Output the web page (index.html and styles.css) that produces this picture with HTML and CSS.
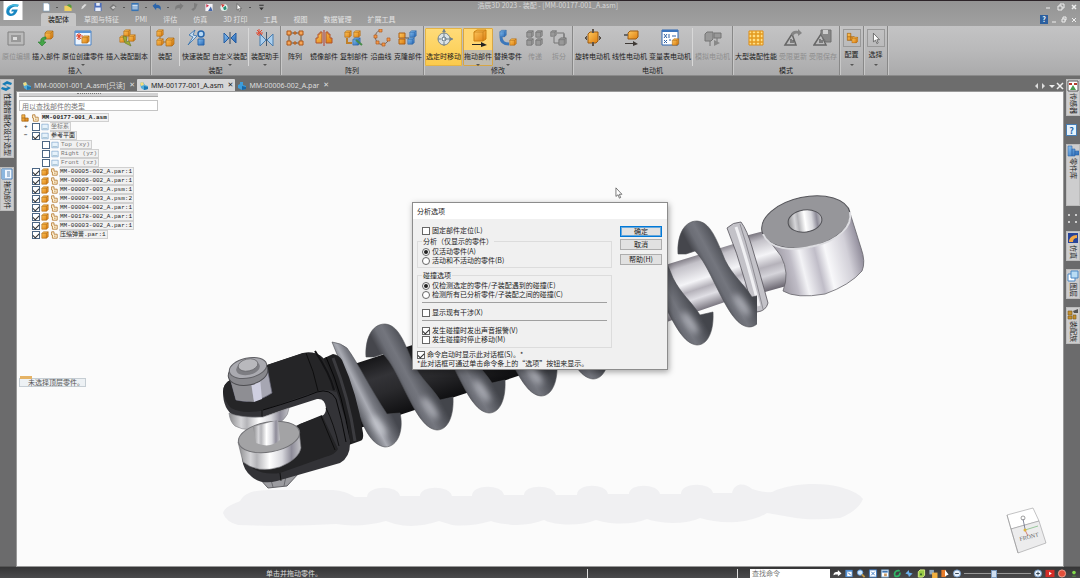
FILE: index.html
```html
<!DOCTYPE html>
<html lang="zh-CN">
<head>
  <meta charset="utf-8">
  <title>浩辰3D 2023 - 装配 - [MM-00177-001_A.asm]</title>
  <link rel="stylesheet" href="styles.css">
</head>
<body>

  <!-- shared icons -->
  <svg class="sprite" aria-hidden="true">
    <defs>
      <linearGradient id="gOrange" x1="0" y1="0" x2="1" y2="1"><stop offset="0" stop-color="#ffc95e"/><stop offset="1" stop-color="#dc7d10"/></linearGradient>
      <linearGradient id="gBlue" x1="0" y1="0" x2="1" y2="1"><stop offset="0" stop-color="#8cc4f2"/><stop offset="1" stop-color="#2465b4"/></linearGradient>
    </defs>
    <symbol id="box" viewBox="0 0 10 10"><path d="M1 3l2-2h6v6L7 9H1z" fill="url(#gOrange)" stroke="#a86410" stroke-width=".7"/><path d="M1 3h6l2-2M7 3v6" fill="none" stroke="#a86410" stroke-width=".6"/></symbol>
    <symbol id="bluebox" viewBox="0 0 10 10"><path d="M1 3l2-2h6v6L7 9H1z" fill="url(#gBlue)" stroke="#2a62a4" stroke-width=".7"/><path d="M1 3h6l2-2M7 3v6" fill="none" stroke="#2a62a4" stroke-width=".6"/></symbol>
    <symbol id="graybox" viewBox="0 0 10 10"><path d="M1 3l2-2h6v6L7 9H1z" fill="#999" stroke="#757575"/><path d="M1 3h6l2-2M7 3v6" fill="none" stroke="#707070" stroke-width=".7"/></symbol>
    <symbol id="asm" viewBox="0 0 10 10"><path d="M1 1h4v4h4v4H1z" fill="url(#gOrange)" stroke="#9c5c0c" stroke-width=".8"/><path d="M1 5h4v4" fill="none" stroke="#9c5c0c" stroke-width=".8"/></symbol>
    <symbol id="lock" viewBox="0 0 10 10"><path d="M2 5V1h3v3h4v5H3V5z" fill="#fff3d6" stroke="#b07428"/><path d="M5 6h2v1H5z" fill="#b07428"/></symbol>
    <symbol id="plane" viewBox="0 0 10 10"><path d="M1 1.500h8v7H1z" fill="#e6f2fb" stroke="#79a4cc" stroke-width=".8"/><path d="M2 7h6" stroke="#8ab" stroke-width=".8"/></symbol>
    <symbol id="tabasm" viewBox="0 0 10 10"><path d="M1 2l3-1 2 3 3 1v3l-4 1-3-2z" fill="#54acd8"/><path d="M1 2l3-1 1 3-3 1z" fill="#f4dc7c"/><path d="M5 5l4 1v2l-4 1z" fill="#1b78b4"/></symbol>
    <symbol id="tabpar" viewBox="0 0 10 10"><path d="M3 1h3v3l3 1v3l-4 1-4-2V4l2-1z" fill="#3d9ddb"/><path d="M5 5l4 1v2l-4 1z" fill="#1767a8"/></symbol>
    <symbol id="cursor" viewBox="0 0 10 14"><path d="M2 1v10l2.500-2 1.500 4 1.500-.7L6 8.500h3z" fill="#fff" stroke="#444" stroke-width=".8"/></symbol>
  </svg>

  <header class="titlebar">
    <svg class="logo" viewBox="0 0 20 20" aria-label="浩辰3D"><path d="M0 0h20v20H0z" fill="#fff"/><path d="M16 4C10 2 4 5 3 10c-1 5 4 7 8 5 2-1 3-3 4-6H9l-1 2h3c-1 2-3 3-4 2-2-2 0-6 4-7 2-.5 4-.3 4 0z" fill="#1887c2"/><path d="M3 9c1-4 6-7 13-5l-1 2C9 4 6 6 3 9z" fill="#45b9dd"/></svg>
    <div class="titlebar-rows">
      <div class="title-row">
        <div class="quick">
          <button aria-label="新建"><svg viewBox="0 0 10 10"><path d="M2 0h5l2 2v7H2z" fill="#fff" stroke="#7799b8" stroke-width=".7"/></svg></button>
          <i class="dot"></i>
          <button aria-label="打开"><svg viewBox="0 0 10 10"><path d="M1 3h4l1 1h3v5H1z" fill="#efd05d"/><path d="M4 3c1-2 3-2 5 0v3L6 4z" fill="#55993b"/></svg></button>
          <button aria-label="编辑"><svg viewBox="0 0 10 10"><path d="M3 7l1-3 3-3 2 1-4 4z" fill="#ddd"/></svg></button>
          <button aria-label="保存"><svg viewBox="0 0 10 10"><path d="M1 0h8v9H1z" fill="#4d6fbc"/><path d="M3 0h4v3H3zM2 5h6v4H2z" fill="#e6ecf8"/></svg></button>
          <button aria-label="打印"><svg viewBox="0 0 10 10"><path d="M1 5l4-4 4 3-4 5z" fill="#777"/><path d="M3 5l3-2 2 2-3 2z" fill="#ccc"/></svg></button>
          <i class="dot"></i>
          <button aria-label="属性"><svg viewBox="0 0 10 10"><path d="M1 0h8v9H1z" fill="#3774b5"/><path d="M2 2h6v1H2zM2 4h6v1H2zM2 6h6v1H2z" fill="#fff"/></svg></button>
          <i class="dot"></i>
          <button aria-label="撤消"><svg viewBox="0 0 10 10"><path d="M0 3l4-3v2c4 0 6 2 5 6-1-2-3-3-5-2v2z" fill="#2c65aa"/></svg></button>
          <i class="dot"></i>
          <button aria-label="重做"><svg viewBox="0 0 10 10"><path d="M10 3L6 0v2C2 2 0 4 1 8c1-2 3-3 5-2v2z" fill="#7c7c7c"/></svg></button>
          <button aria-label="更新"><svg viewBox="0 0 10 10"><path d="M5 0l4 1-2 5-3 3-2-2 3-2z" fill="#7d7d7d"/></svg></button>
          <button aria-label="检查"><svg viewBox="0 0 10 10"><path d="M1 1h8v8H1z" fill="#f3f3f8"/><path d="M2 1l3 2-3 2z" fill="#d2334a"/><path d="M4 9l3-5 2 5z" fill="#4668aa"/></svg></button>
          <button aria-label="目标"><svg viewBox="0 0 10 10"><circle cx="5" cy="5" r="4" fill="#e5f3ee"/><path d="M2 1l4 1-3 3z" fill="#d53a38"/><path d="M4 5l3-2 1 4-3 1z" fill="#2a9076"/></svg></button>
          <button aria-label="选择"><svg viewBox="0 0 10 14"><use href="#cursor"/></svg></button>
          <i class="dot"></i>
          <button aria-label="自定义"><svg viewBox="0 0 10 10"><path d="M3 2h5v1H3zM3 5h5L5.500 8z" fill="#333"/></svg></button>
        </div>
        <h1 class="title">浩辰3D 2023 - 装配 - [MM-00177-001_A.asm]</h1>
        <div class="window-buttons">
          <button aria-label="最小化"><svg viewBox="0 0 8 8"><path d="M2 5h4" stroke="#eee"/></svg></button>
          <button aria-label="还原"><svg viewBox="0 0 8 8"><path d="M1 3h4v4H1zM3 3V1h4v4H5" stroke="#eee" fill="none"/></svg></button>
          <button aria-label="关闭"><svg viewBox="0 0 8 8"><path d="M2 2l4 4M6 2L2 6" stroke="#eee" stroke-width="1.500"/></svg></button>
        </div>
      </div>
      <div class="menu-row">
        <nav class="menu">
          <a href="#" class="current">装配体</a>
          <a href="#">草图与特征</a>
          <a href="#">PMI</a>
          <a href="#">评估</a>
          <a href="#">仿真</a>
          <a href="#">3D 打印</a>
          <a href="#">工具</a>
          <a href="#">视图</a>
          <a href="#">数据管理</a>
          <a href="#">扩展工具</a>
        </nav>
        <div class="doc-buttons">
          <button class="help" aria-label="帮助">?</button>
          <button aria-label="最小化文档"><svg viewBox="0 0 8 8"><path d="M2 6h4" stroke="#eee"/></svg></button>
          <button aria-label="还原文档"><svg viewBox="0 0 8 8"><path d="M2 3h3v3H2zM3 3V1h3v3H5" stroke="#eee" fill="none"/></svg></button>
          <button aria-label="关闭文档"><svg viewBox="0 0 8 8"><path d="M2 2l4 4M6 2L2 6" stroke="#eee"/></svg></button>
        </div>
      </div>
    </div>
  </header>

  <div class="ribbon">
    <section class="group">
      <div class="tools">
        <button class="tool" disabled><svg viewBox="0 0 20 18"><path d="M2 3h16v13H2z" fill="#bbb" stroke="#808080"/><path d="M5 6h10v7H5z" fill="#999"/><path d="M7 8h4v3H7z" fill="#ddd"/></svg>原位编辑</button>
        <button class="tool"><svg viewBox="0 0 20 18"><use href="#box" x="8" y="1" width="10" height="10"/><path d="M10 8c-4 0-6 2-5 5H2l4 4 4-4H8c0-2 0-3 2-3z" fill="#45a548" stroke="#287a31" stroke-width=".6"/></svg>插入部件</button>
        <button class="tool caret"><svg viewBox="0 0 20 18"><path d="M2 2h16v14H2z" fill="#eef6ff" stroke="#4d83c4"/><path d="M2 2h16v2H2z" fill="#5b93d2"/><use href="#box" x="8" y="6" width="9" height="9"/><path d="M6 4v7M3 7h7M4 5l4 5M8 5l-4 5" stroke="#e33d22"/></svg>原位创建零件</button>
        <button class="tool"><svg viewBox="0 0 20 18"><use href="#box" x="6" y="0" width="8" height="8"/><use href="#box" x="11" y="5" width="8" height="8"/><use href="#box" x="2" y="6" width="8" height="8"/><path d="M6 7l4 1-1 5 3-1 2 5-6-3-1-3z" fill="#a0ad35" stroke="#63762a" stroke-width=".6"/></svg>插入装配副本</button>
      </div>
      <h2>插入</h2>
    </section>

    <section class="group tight">
      <div class="tools">
        <button class="tool"><svg viewBox="0 0 20 18"><path d="M5 4v9h10" stroke="#a56e22" fill="none"/><use href="#box" x="1" y="0" width="8" height="8"/><use href="#box" x="1" y="9" width="8" height="8"/><use href="#box" x="10" y="8" width="10" height="10"/></svg>装配</button>
        <i class="rule"></i>
        <button class="tool"><svg viewBox="0 0 20 18"><path d="M9 1L3 6l4 2-5 8 9-9-4-1z" fill="#cfe4f7" stroke="#316da9" stroke-width=".8"/><circle cx="15" cy="5" r="3" fill="#b7d8f4" stroke="#2867ac" stroke-width="1.500"/><path d="M12 10h6v6h-6z" fill="url(#gBlue)" stroke="#2867ac"/></svg>快速装配</button>
        <button class="tool caret"><svg viewBox="0 0 20 18"><path d="M4 4l5 5-5 5zM16 4l-5 5 5 5z" fill="url(#gBlue)" stroke="#235ca3"/><path d="M10 3v12" stroke="#35485f"/></svg>自定义装配</button>
        <i class="rule"></i>
        <button class="tool caret"><svg viewBox="0 0 20 18"><path d="M5 5l6 6-6 6zM18 5l-6 6 6 6z" fill="#abcfee" stroke="#477caf"/><path d="M11.500 3v14" stroke="#44576b"/><path d="M4 0v7M1 4h7M2 1l5 5M7 1L2 6" stroke="#df4930"/></svg>装配助手</button>
      </div>
      <h2>装配</h2>
    </section>

    <section class="group tight">
      <div class="tools">
        <button class="tool"><svg viewBox="0 0 20 18"><path d="M4 4h12v10H4z" fill="none" stroke="#60584e"/><g fill="#f6a75a" stroke="#ad5716"><path d="M2 2h4v4H2zM14 2h4v4h-4zM2 12h4v4H2zM14 12h4v4h-4z"/><path d="M9 3h2v2H9zM9 13h2v2H9z"/></g></svg>阵列</button>
        <button class="tool"><svg viewBox="0 0 20 18"><path d="M8 3v11H2V9h2V5h2V3zM12 3v11h6V9h-2V5h-2V3z" fill="url(#gOrange)" stroke="#b1522b"/><path d="M10 1v16" stroke="#b23a2c"/></svg>镜像部件</button>
        <button class="tool"><svg viewBox="0 0 20 18"><use href="#box" x="0" y="1" width="8" height="8"/><use href="#box" x="9" y="1" width="8" height="8"/><path d="M3 9v5h5" fill="none" stroke="#c0802a" stroke-width="2"/><use href="#bluebox" x="8" y="8" width="9" height="9"/><path d="M12 11l6 5" stroke="#488c4a" stroke-width="2"/></svg>复制部件</button>
        <button class="tool mid"><svg viewBox="0 0 20 18"><path d="M9 1C3 4 3 10 7 14c4 3 9 1 11-4" fill="none" stroke="#7a6657"/><g fill="#f29748" stroke="#b15d21" stroke-width=".7"><path d="M8 0h3v3H8zM3 6h3v3H3zM5 12h3v3H5zM11 14h3v3h-3zM16 9h3v3h-3z"/></g></svg>沿曲线</button>
        <button class="tool"><svg viewBox="0 0 20 18"><path d="M1 4h6v5H1zM1 10h6v5H1z" fill="url(#gOrange)" stroke="#ac6117"/><use href="#bluebox" x="11" y="1" width="8" height="8"/><use href="#bluebox" x="9" y="8" width="8" height="8"/><path d="M7 9h4" stroke="#555"/></svg>克隆部件</button>
      </div>
      <h2>阵列</h2>
    </section>

    <section class="group">
      <div class="tools">
        <button class="tool pressed"><svg viewBox="0 0 20 18"><circle cx="10" cy="10" r="6" fill="#dbe2e6" stroke="#78858c"/><circle cx="10" cy="10" r="2" fill="#fff" stroke="#596e7e"/><path d="M10 0v8M10 10h9M4 10h3M10 13v4" stroke="#71818c"/><path d="M8 3l2-3 2 3zM16 8l3 2-3 2z" fill="#71818c"/></svg>选定时移动</button>
        <button class="tool split caret"><svg viewBox="0 0 20 18"><path d="M6 3l3-2h9v9l-3 2H6z" fill="url(#gOrange)" stroke="#cf8212"/><path d="M6 3h9l3-2M15 3v9" fill="none" stroke="#b97610" stroke-width=".6"/><path d="M4 15h9v-2l6 3-6 2v-2H4z" fill="#222"/></svg>拖动部件</button>
        <button class="tool caret"><svg viewBox="0 0 20 18"><use href="#bluebox" x="1" y="0" width="8" height="9"/><path d="M3 8c0 5 3 7 8 7" fill="none" stroke="#3b77bb" stroke-width="3"/><use href="#box" x="11" y="9" width="8" height="8"/></svg>替换零件</button>
        <button class="tool mid" disabled><svg viewBox="0 0 20 18"><use href="#graybox" x="1" y="1" width="8" height="8"/><use href="#graybox" x="10" y="1" width="8" height="8"/><use href="#graybox" x="1" y="9" width="8" height="8"/><use href="#graybox" x="10" y="9" width="8" height="8"/></svg>传递</button>
        <button class="tool mid" disabled><svg viewBox="0 0 20 18"><use href="#graybox" x="1" y="1" width="7" height="7"/><path d="M8 4h7v5M5 8v6h6M15 5v8" stroke="#757575" fill="none"/><use href="#graybox" x="9" y="8" width="9" height="9"/></svg>拆分</button>
      </div>
      <h2>修改</h2>
    </section>

    <section class="group">
      <div class="tools">
        <button class="tool"><svg viewBox="0 0 20 18"><path d="M5 5l2-2h8v9l-2 2H5z" fill="url(#gOrange)" stroke="#9b5b13"/><path d="M10 0v4M10 13v4" stroke="#605448" stroke-width="2"/><path d="M4 7L2 9l2 2M16 7l2 2-2 2" fill="#6b6256" stroke="#514a43"/></svg>旋转电动机</button>
        <button class="tool"><svg viewBox="0 0 20 18"><path d="M8 4l2-2h8v6l-2 2H8z" fill="url(#gOrange)" stroke="#9b5b13"/><path d="M4 6h4" stroke="#666" stroke-width="2"/><path d="M5 14h8v-2l5 3-5 2v-2H5z" fill="#3e3935"/></svg>线性电动机</button>
        <button class="tool"><svg viewBox="0 0 20 18"><path d="M2 1h16v15H2z" fill="#fff" stroke="#2f66b0"/><path d="M2 1h16v2H2z" fill="#3b74bc"/><path d="M4 5l3 4M7 5L4 9M9 5v4M12 7h4M4 11l3 3M7 11l-3 3M9 11h2" stroke="#2e61a4"/><use href="#box" x="11" y="9" width="9" height="8"/></svg>变量表电动机</button>
        <i class="rule"></i>
        <button class="tool" disabled><svg viewBox="0 0 20 18"><path d="M2 5l2-2h6v7L8 12H2zM11 4h7v5h-7zM7 12v5M14 9v6" fill="#999" stroke="#757575"/><path d="M11 11l6 3-6 3z" fill="#888"/></svg>模拟电动机</button>
      </div>
      <h2>电动机</h2>
    </section>

    <section class="group">
      <div class="tools">
        <button class="tool"><svg viewBox="0 0 20 18"><path d="M3 2h14v14H3z" fill="#ffdf86" stroke="#dc8b14"/><path d="M6 2v14M10 2v14M14 2v14M3 5h14M3 9h14M3 13h14" stroke="#e49a1f" stroke-width="1.500"/></svg>大型装配性能</button>
        <button class="tool" disabled><svg viewBox="0 0 20 18"><path d="M2 16L9 5l4 11zM8 10v4M10 11v3" fill="none" stroke="#666" stroke-width="1.500"/><path d="M8 5c1-3 4-4 7-3V0l4 4-4 3V5c-2-1-4 0-5 2z" fill="#858585"/></svg>受限更新</button>
        <button class="tool" disabled><svg viewBox="0 0 20 18"><path d="M1 16L8 5l5 11zM7 10v4M9 11v3" fill="none" stroke="#666" stroke-width="1.500"/><path d="M8 1h10v12h-5L8 6z" fill="#888" stroke="#707070"/><path d="M10 1h5v4h-5z" fill="#ccc"/></svg>受限保存</button>
      </div>
      <h2>模式</h2>
    </section>

    <section class="group narrow">
      <button class="tool framed caret"><svg viewBox="0 0 20 18"><use href="#asm" x="3" y="2" width="11" height="11"/><use href="#box" x="9" y="7" width="9" height="9"/></svg>配置</button>
    </section>
    <section class="group narrow">
      <button class="tool framed caret"><svg viewBox="0 0 20 18"><use href="#cursor" x="4" y="2" width="12" height="15"/></svg>选择</button>
    </section>
  </div>

  <div class="doc-tabs">
    <div class="doc-tab"><svg viewBox="0 0 10 10"><use href="#tabasm"/></svg><a href="#">MM-00001-001_A.asm[只读]</a><button aria-label="关闭">✕</button></div>
    <div class="doc-tab active"><svg viewBox="0 0 10 10"><use href="#tabasm"/></svg><a href="#">MM-00177-001_A.asm</a><button aria-label="关闭">✕</button></div>
    <div class="doc-tab"><svg viewBox="0 0 10 10"><use href="#tabpar"/></svg><a href="#">MM-00006-002_A.par</a><button aria-label="关闭">✕</button></div>
    <div class="tab-nav">
      <button aria-label="上一个"><svg viewBox="0 0 8 8"><path d="M6 1v6L3 4z" fill="#ddd"/></svg></button>
      <button aria-label="下一个"><svg viewBox="0 0 8 8"><path d="M2 1v6l3-3z" fill="#ddd"/></svg></button>
      <button aria-label="列表"><svg viewBox="0 0 8 8"><path d="M1 3h6L4 6z" fill="#eee"/></svg></button>
      <button aria-label="关闭"><svg viewBox="0 0 8 8"><path d="M1 1l6 6M7 1L1 7" stroke="#eee" stroke-width="1.500"/></svg></button>
    </div>
  </div>

  <div class="workspace">
    <aside class="dock left">
      <button class="dock-tab"><svg viewBox="0 0 12 12"><path d="M1 4l5-3 5 2-1 2-4-1-2 1 6 3-5 3-5-2 1-2 4 1 2-1z" fill="#167bb5"/></svg><span>性能智能化设计选型</span></button>
      <button class="dock-tab"><svg viewBox="0 0 12 12"><path d="M1 1h10v10H1z" fill="#f2f8ff" stroke="#4a80ba"/><path d="M1 1h3v10H1z" fill="#8bb7df"/><path d="M6 4h3M6 6h3M6 8h3" stroke="#5d88b4"/></svg><span>拖动部件</span></button>
    </aside>

    <main class="viewport">
      <svg class="scene" viewBox="17 92 1046 474" preserveAspectRatio="xMidYMid meet">
        <defs>
          <linearGradient id="coilFill" gradientUnits="userSpaceOnUse" x1="396" y1="384" x2="424" y2="369">
            <stop offset="0" stop-color="#45464c"/><stop offset=".25" stop-color="#6c6e76"/><stop offset=".45" stop-color="#74767e"/><stop offset=".8" stop-color="#55575e"/><stop offset="1" stop-color="#43454b"/>
          </linearGradient>
          <linearGradient id="coilEnd" gradientUnits="userSpaceOnUse" x1="346" y1="392" x2="374" y2="378">
            <stop offset="0" stop-color="#55575e"/><stop offset=".4" stop-color="#a9abb3"/><stop offset=".6" stop-color="#787a82"/><stop offset="1" stop-color="#45474e"/>
          </linearGradient>
          <linearGradient id="tube" gradientUnits="userSpaceOnUse" x1="385" y1="352" x2="405" y2="412">
            <stop offset="0" stop-color="#141416"/><stop offset=".35" stop-color="#333337"/><stop offset=".6" stop-color="#2a2a2d"/><stop offset="1" stop-color="#101012"/>
          </linearGradient>
          <linearGradient id="rod" gradientUnits="userSpaceOnUse" x1="695" y1="254" x2="713" y2="308">
            <stop offset="0" stop-color="#77737c"/><stop offset=".15" stop-color="#c3c1c8"/><stop offset=".45" stop-color="#f4f4f7"/><stop offset=".6" stop-color="#b5b2ba"/><stop offset=".75" stop-color="#e0dfe5"/><stop offset="1" stop-color="#6c6872"/>
          </linearGradient>
          <linearGradient id="neck" gradientUnits="userSpaceOnUse" x1="758" y1="232" x2="775" y2="289">
            <stop offset="0" stop-color="#77737c"/><stop offset=".15" stop-color="#c3c1c8"/><stop offset=".4" stop-color="#f4f4f7"/><stop offset=".6" stop-color="#b5b2ba"/><stop offset=".75" stop-color="#d5d4da"/><stop offset="1" stop-color="#6c6872"/>
          </linearGradient>
          <linearGradient id="eye" x1="0" x2="1" y1=".2" y2="0">
            <stop offset="0" stop-color="#8d8993"/><stop offset=".2" stop-color="#bfbcc6"/><stop offset=".3" stop-color="#f3f3f6"/><stop offset=".45" stop-color="#c0bdc8"/><stop offset=".55" stop-color="#f8f8fa"/><stop offset=".75" stop-color="#d2d0d8"/><stop offset=".88" stop-color="#9692a0"/><stop offset="1" stop-color="#6f6b78"/>
          </linearGradient>
          <linearGradient id="steel" x1="0" x2="1">
            <stop offset="0" stop-color="#8a8a8c"/><stop offset=".2" stop-color="#d5d5d8"/><stop offset=".3" stop-color="#b4b4b8"/><stop offset=".5" stop-color="#ffffff"/><stop offset=".7" stop-color="#d8d8dd"/><stop offset=".85" stop-color="#8d8b98"/><stop offset="1" stop-color="#c4c4c8"/>
          </linearGradient>
          <filter id="soft" x="-100%" y="-100%" width="300%" height="300%"><feGaussianBlur stdDeviation="3"/></filter>
          <clipPath id="springEnd"><path d="M660 200H757V340H660z"/></clipPath>
          <g id="coil">
            <path d="M366 357C365 340 371 324 385 324C398 325 404 341 413 363C421 379 431 386 440 400L453 397C454 416 448 430 437 430C424 429 415 411 403 387C397 375 391 362 383 354L374 357Z" fill="url(#coilFill)" stroke="#4b4d53" stroke-width=".6"/>
            <ellipse cx="430" cy="408" rx="4" ry="13" transform="rotate(-35 430 408)" fill="#c6c8d0" opacity=".75" filter="url(#soft)"/>
          </g>
        </defs>

        <!-- floor shadow -->
        <path d="M223 513C225 506 234 504 240 501C246 491 256 490 275 490H333Q346 491 355 497H367C368 485 398 485 400 496H420C420 485 450 485 452 496H472C472 484 502 484 504 495H524C524 484 554 484 556 495H577C577 483 606 483 608 494H629C629 483 658 483 660 494H681C681 482 711 482 713 493H732C735 482 745 483 752 489Q764 493 772 492C790 483 822 482 840 487Q858 492 863 499Q858 511 840 518Q810 521 790 517L767 513Q756 520 737 522Q715 523 700 518Q690 523 672 523Q655 522 647 519Q632 525 610 523Q602 522 596 520Q580 526 560 524Q550 523 544 520Q525 527 505 524Q496 523 491 521Q470 527 452 525L439 521Q415 529 395 524L386 521Q360 528 336 524Q290 527 238 525Q226 522 223 513Z" fill="#f0f0f2"/>

        <!-- damper body, rod and flange -->
        <path d="M345 367L600 284V349L360 428Z" fill="url(#tube)"/>
        <path d="M610 282L740 242L760 290L620 338Z" fill="url(#rod)"/>
        <path d="M745 236L775 228L790 285L765 292Z" fill="url(#neck)"/>
        <use href="#coil" x="260" y="-85"/>
        <path d="M727 228Q733 222 741 222Q747 230 752 247Q760 273 768 303Q766 311 757 312Q750 300 745 281Q737 252 727 228Z" fill="#c3c2c8" stroke="#55535b" stroke-width=".8"/>
        <path d="M736 227Q746 256 759 306" fill="none" stroke="#f0f0f3" stroke-width="3"/>
        <path d="M740 224Q751 258 763 309" fill="none" stroke="#77757c" stroke-width=".7"/>
        <g clip-path="url(#springEnd)"><use href="#coil" x="312" y="-103"/></g>

        <!-- eye -->
        <path d="M762 232Q772 244 781 256Q790 273 783 291Q796 299 825 294Q850 285 862 271Q866 262 861 248L850 213L806 222Z" fill="url(#eye)" stroke="#66646b" stroke-width=".8"/>
        <ellipse cx="806" cy="222" rx="45" ry="25" transform="rotate(-12 806 222)" fill="#96969a" stroke="#55555a"/>
        <path d="M763 234C769 249 792 252 814 246C838 241 853 226 850 212" fill="none" stroke="#dddde1" stroke-width="2"/>
        <ellipse cx="805" cy="221" rx="17" ry="11" transform="rotate(-8 805 221)" fill="url(#steel)" stroke="#515156"/>

        <!-- spring -->
        <use href="#coil" x="208" y="-68"/>
        <use href="#coil" x="156" y="-51"/>
        <use href="#coil" x="104" y="-34"/>
        <use href="#coil" x="52" y="-17"/>
        <use href="#coil"/>
        <path d="M332 342Q341 343 347 348C358 363 370 388 387 414L400 413C404 430 398 447 385 447C371 445 362 427 355 400C350 384 342 367 332 342Z" fill="url(#coilEnd)" stroke="#4b4d53" stroke-width=".6"/>
        <ellipse cx="379" cy="426" rx="4" ry="12" transform="rotate(-35 379 426)" fill="#cfd1d8" opacity=".8" filter="url(#soft)"/>

        <!-- collar -->
        <path d="M320 360L333 354Q339 355 342 360Q357 393 363 433Q364 440 360 441L346 446Z" fill="#1f1f21"/>
        <path d="M333 358Q349 398 355 441" fill="none" stroke="#3b3b3f" stroke-width="3"/>
        <path d="M326 357Q344 396 350 444" fill="none" stroke="#060607"/>

        <!-- lower nut, fork -->
        <path d="M258 477L268 488L287 486L299 473Z" fill="#9c9ca0" stroke="#616165"/>
        <path d="M271 480l2 7M286 476l-2 10" stroke="#6a6a6e" fill="none"/>
        <path d="M223 392Q223 384 230 380L267 365L303 353Q316 351 323 358Q341 396 350 440Q351 457 340 463L277 481Q262 485 252 477Q243 470 242 458L262 442L300 424L322 416Q326 414 326 408Q325 398 317 399L289 408L263 417Q245 420 234 416Q223 409 223 392Z" fill="#333337"/>
        <path d="M223 392Q223 384 230 380L267 365L303 353Q316 351 323 358Q334 377 336 392Q326 388 315 392L260 411Q242 414 231 408Q225 402 223 392Z" fill="#252527"/>
        <path d="M246 463L300 424L322 415L338 449Q336 454 325 457L280 473Q258 476 246 463Z" fill="#242426"/>
        <path d="M263 410Q300 399 317 392Q330 388 336 399Q342 420 346 442" fill="none" stroke="#09090a"/>
        <path d="M326 408Q334 424 339 446M306 353Q314 371 318 391M262 410v7M280 473l1 8M321 416l14 34" fill="none" stroke="#070708" stroke-width=".8"/>
        <path d="M315 351Q330 374 334 390" fill="none" stroke="#121214" stroke-width="2"/>

        <!-- bushings and pin -->
        <path d="M229 413Q240 418 263 417L289 408Q288 422 268 427Q248 433 235 426Q230 422 229 413Z" fill="url(#steel)" stroke="#808085" stroke-width=".6"/>
        <path d="M238 442L243 462Q258 474 280 467Q299 459 301 448L299 430Z" fill="url(#steel)" stroke="#6e6e73" stroke-width=".6"/>
        <ellipse cx="269" cy="437" rx="31" ry="15" transform="rotate(-10 269 437)" fill="#a3a3a5" stroke="#707074"/>
        <path d="M253 427L278 420L280 440Q270 449 256 443Z" fill="url(#steel)"/>

        <!-- top bolt -->
        <path d="M230 378L236 400Q254 405 272 393L267 367Z" fill="#a6a6b2" stroke="#69697a" stroke-width=".7"/>
        <path d="M230 378L236 400L254 402L251 382Z" fill="#8e8e93"/>
        <path d="M251 382L254 402L262 399L260 378Z" fill="#cfcfe0"/>
        <ellipse cx="248" cy="373" rx="20" ry="12" transform="rotate(-12 248 373)" fill="#88888d" stroke="#4e4e52"/>
        <ellipse cx="248" cy="368" rx="19" ry="10" transform="rotate(-12 248 368)" fill="#aaaab0" stroke="#606065"/>
        <ellipse cx="248" cy="368" rx="12" ry="7" transform="rotate(-12 248 368)" fill="#7d7d82"/>
        <ellipse cx="248" cy="365" rx="10" ry="6" transform="rotate(-12 248 365)" fill="#b9b9bd" stroke="#616165" stroke-width=".7"/>

        <!-- view cube -->
        <g stroke="#88888b" stroke-width=".5">
          <path d="M1007 515L1033 508L1039 521L1011 529Z" fill="#fff"/>
          <path d="M1011 529L1039 521L1046 543L1018 553Z" fill="#ececed"/>
          <path d="M1007 515L1011 529L1018 553" fill="none"/>
        </g>
        <path d="M1023 519l2 10" stroke="#555b77" stroke-width=".7"/>
        <path d="M1025 530l13-4" stroke="#74b878" stroke-width=".7"/>
        <path d="M1025 530l3 6" stroke="#cc5047" stroke-width=".7"/>
        <circle cx="1025" cy="530" r="1.500" fill="#ddb23c"/>
        <circle cx="1023" cy="518" r="2" fill="none" stroke="#777" stroke-width=".7"/>
        <text class="cube-text" x="1020" y="541" transform="rotate(-14 1020 541)">FRONT</text>
        <use href="#cursor" x="614" y="187" width="9" height="12"/>
      </svg>

      <div class="pathfinder">
        <div class="grip"><i></i></div>
        <input class="find" type="text" aria-label="查找部件" placeholder="用以查找部件的类型">
        <ul class="tree">
          <li class="root"><svg><use href="#asm"/></svg><svg><use href="#lock"/></svg><b>MM-00177-001_A.asm</b></li>
          <li class="node dim"><i class="twist">+</i><label><input type="checkbox"><svg><use href="#plane"/></svg><span>坐标系</span></label></li>
          <li class="node"><i class="twist">−</i><label><input type="checkbox" checked><svg><use href="#plane"/></svg><span>参考平面</span></label></li>
          <li class="leaf dim"><label><input type="checkbox"><svg><use href="#plane"/></svg><span>Top (xy)</span></label></li>
          <li class="leaf dim"><label><input type="checkbox"><svg><use href="#plane"/></svg><span>Right (yz)</span></label></li>
          <li class="leaf dim"><label><input type="checkbox"><svg><use href="#plane"/></svg><span>Front (xz)</span></label></li>
          <li class="part"><label><input type="checkbox" checked><svg><use href="#box"/></svg><svg><use href="#lock"/></svg><span>MM-00005-002_A.par:1</span></label></li>
          <li class="part"><label><input type="checkbox" checked><svg><use href="#box"/></svg><svg><use href="#lock"/></svg><span>MM-00006-002_A.par:1</span></label></li>
          <li class="part"><label><input type="checkbox" checked><svg><use href="#box"/></svg><svg><use href="#lock"/></svg><span>MM-00007-003_A.psm:1</span></label></li>
          <li class="part"><label><input type="checkbox" checked><svg><use href="#box"/></svg><svg><use href="#lock"/></svg><span>MM-00007-003_A.psm:2</span></label></li>
          <li class="part"><label><input type="checkbox" checked><svg><use href="#box"/></svg><svg><use href="#lock"/></svg><span>MM-00004-002_A.par:1</span></label></li>
          <li class="part"><label><input type="checkbox" checked><svg><use href="#box"/></svg><svg><use href="#lock"/></svg><span>MM-00178-002_A.par:1</span></label></li>
          <li class="part"><label><input type="checkbox" checked><svg><use href="#box"/></svg><svg><use href="#lock"/></svg><span>MM-00003-002_A.par:1</span></label></li>
          <li class="part"><label><input type="checkbox" checked><svg><use href="#box"/></svg><svg><use href="#lock"/></svg><span>压缩弹簧.par:1</span></label></li>
        </ul>
      </div>

      <div class="notice">未选择顶层零件。</div>

      <form class="dialog" role="dialog" aria-labelledby="dialog-title">
        <h2 id="dialog-title">分析选项</h2>
        <div class="dialog-body">
          <div class="options">
            <label class="opt indent"><input type="checkbox">固定部件定位(L)</label>
            <fieldset>
              <legend>分析（仅显示的零件）</legend>
              <label class="opt"><input type="radio" name="analysis" checked>仅活动零件(A)</label>
              <label class="opt"><input type="radio" name="analysis">活动和不活动的零件(B)</label>
            </fieldset>
            <fieldset class="collision">
              <legend>碰撞选项</legend>
              <label class="opt"><input type="radio" name="collision" checked>仅检测选定的零件/子装配遇到的碰撞(E)</label>
              <label class="opt"><input type="radio" name="collision">检测所有已分析零件/子装配之间的碰撞(C)</label>
              <hr>
              <label class="opt"><input type="checkbox">显示现有干涉(X)</label>
              <hr>
              <label class="opt"><input type="checkbox" checked>发生碰撞时发出声音报警(V)</label>
              <label class="opt"><input type="checkbox">发生碰撞时停止移动(M)</label>
            </fieldset>
            <label class="opt"><input type="checkbox" checked>命令启动时显示此对话框(S)。*</label>
            <p>*此对话框可通过单击命令条上的“选项”按钮来显示。</p>
          </div>
          <div class="actions">
            <button type="button" class="default">确定</button>
            <button type="button">取消</button>
            <button type="button" class="apart">帮助(H)</button>
          </div>
        </div>
      </form>
    </main>

    <aside class="dock right">
      <button class="dock-tab"><svg viewBox="0 0 12 12"><path d="M1 1h10v10H1z" fill="#fff" stroke="#555"/><path d="M2 3h3v2H2zM7 3h3v2H7z" fill="#b63a2e"/><path d="M3 10l3-5 3 5z" fill="#4a9b50"/></svg><span>传感器</span></button>
      <button class="dock-icon" aria-label="帮助">?</button>
      <button class="dock-tab tall"><svg viewBox="0 0 12 12"><path d="M1 1h4v10H1zM5 4h3v7H5zM8 6h4v4H8z" fill="url(#gBlue)" stroke="#3165a8" stroke-width=".6"/></svg><span>零件库</span></button>
      <div class="dots"><i></i><i></i><i></i><i></i></div>
      <button class="dock-tab"><svg viewBox="0 0 12 12"><path d="M1 1h10v10H1z" fill="#28449a"/><path d="M2 10c0-4 3-7 8-7v3c-3 0-4 2-4 4z" fill="#f3a745"/></svg><span>仿真</span></button>
      <button class="dock-tab"><svg viewBox="0 0 12 12"><path d="M1 4h7v7H1z" fill="#fff" stroke="#4a87c4"/><path d="M4 1h7v7H4z" fill="#b9dcf4" stroke="#4a87c4"/></svg><span>图层</span></button>
      <button class="dock-tab"><svg viewBox="0 0 12 12"><path d="M1 3h4v4H1zM1 8h4v3H1zM6 7h3v4H6z" fill="#c5902c" stroke="#7b5820" stroke-width=".6"/><path d="M6 3l5-2v4H7z" fill="#555"/></svg><span>装配族</span></button>
    </aside>
  </div>

  <footer class="status">
    <p class="prompt">单击并拖动零件。</p>
    <p class="cell"></p>
    <div class="status-tools">
      <input class="command" type="text" aria-label="查找命令" placeholder="查找命令">
      <button aria-label="执行"><svg viewBox="0 0 10 10"><path d="M1 7c0-3 2-4 5-4V1l4 4-4 3V6c-2 0-4 0-5 1z" fill="#fff"/></svg></button>
      <button aria-label="适合"><svg viewBox="0 0 10 10"><path d="M1 1h8v8H1z" fill="#5290d4"/><path d="M3 3h5v5H3z" fill="#fff"/><path d="M4 4l3 3" stroke="#3468a8"/></svg></button>
      <button aria-label="缩放"><svg viewBox="0 0 10 10"><circle cx="4" cy="4" r="3" fill="#d5ebff" stroke="#5c9ce0"/><path d="M6 6l3 3" stroke="#c59a46" stroke-width="2"/></svg></button>
      <button aria-label="窗口"><svg viewBox="0 0 10 10"><path d="M1 1h8v8H1z" fill="#fff" stroke="#3675c1"/><path d="M3 3l4 4M7 3L3 7" stroke="#3675c1"/></svg></button>
      <button aria-label="平移"><svg viewBox="0 0 10 10"><path d="M1 1h8v8H1z" fill="#fff" stroke="#7ca5cc"/><path d="M2 2h6v2H2z" fill="#3c75b3"/><path d="M4 5h3v3H4z" fill="#c79863"/></svg></button>
      <button aria-label="旋转"><svg viewBox="0 0 10 10"><path d="M8 2C3 1 1 5 3 8c4 1 6-2 5-4" fill="none" stroke="#2fb565" stroke-width="2"/></svg></button>
      <button aria-label="视图"><svg viewBox="0 0 10 10"><path d="M1 5l4-4v3l4 1-4 4-1-3z" fill="#6cb0ec"/></svg></button>
      <button aria-label="样式"><svg viewBox="0 0 10 10"><path d="M2 3l2-2h5v6L7 9H2z" fill="#99cb45" stroke="#dcf08c"/><path d="M4 5h2v2H4z" fill="#315b2c"/></svg></button>
      <button aria-label="图层"><svg viewBox="0 0 10 10"><path d="M1 1h5v5H1z" fill="#8fa7bd"/><path d="M4 4h6v6H4z" fill="#f1af3f"/></svg></button>
      <button aria-label="选择"><svg viewBox="0 0 10 10"><path d="M1 1h5v8H1z" fill="#e87d2b"/><path d="M5 1v7l4-2z" fill="#fff"/></svg></button>
      <button aria-label="缩小"><svg viewBox="0 0 10 10"><circle cx="5" cy="5" r="4" fill="#e8f1fb" stroke="#6e99cb"/><path d="M3 5h4" stroke="#234"/></svg></button>
      <input class="zoom" type="range" min="0" max="100" value="45" aria-label="缩放比例">
      <button aria-label="放大"><svg viewBox="0 0 10 10"><circle cx="5" cy="5" r="4" fill="#e8f1fb" stroke="#6e99cb"/><path d="M3 5h4M5 3v4" stroke="#234"/></svg></button>
      <button aria-label="视频"><svg viewBox="0 0 10 10"><path d="M0 1h10v8H0z" fill="#d52d27"/><path d="M4 3v4l3-2z" fill="#fff"/></svg></button>
      <button aria-label="录制"><svg viewBox="0 0 10 10"><circle cx="5" cy="5" r="4" fill="#e2503b" stroke="#f8a594"/></svg></button>
      <button aria-label="状态"><svg viewBox="0 0 10 10"><circle cx="5" cy="4" r="2" fill="#82d94d"/><path d="M3 8h4" stroke="#58963b"/></svg></button>
    </div>
  </footer>

</body>
</html>
```

FILE: styles.css
```css
* {
  box-sizing: border-box;
}

html, body {
  height: 100%;
}

body {
  margin: 0;
  display: flex;
  flex-direction: column;
  overflow: hidden;
  background: #6b6b6c;
  color: #1c1c1c;
  font-family: "Noto Sans CJK SC", sans-serif;
  font-size: 7px;
  line-height: 9px;
}

button, input {
  margin: 0;
  font: inherit;
  color: inherit;
}

button {
  padding: 0;
  border: 0;
  background: none;
}

a {
  color: inherit;
  text-decoration: none;
}

h1, h2, p, ul {
  margin: 0;
  padding: 0;
  font-size: 7px;
  font-weight: normal;
}

svg {
  display: block;
  flex: none;
}

.sprite {
  position: absolute;
  width: 0;
  height: 0;
}

/* title bar and menu */
.titlebar {
  display: flex;
  gap: 18px;
  height: 26px;
  padding-left: 3px;
  border-top: 1px solid #2c2328;
  background: linear-gradient(#949494, #a0a0a0);
}

.logo {
  width: 20px;
  height: 19px;
}

.titlebar-rows {
  flex: 1;
}

.title-row {
  display: grid;
  grid-template-columns: 42% auto 1fr;
  height: 12px;
}

.title {
  color: #d8d8d8;
  line-height: 9px;
}

.quick {
  display: flex;
  gap: 5px;
}

.quick svg {
  width: 10px;
  height: 9px;
}

.dot {
  align-self: center;
  width: 2px;
  height: 1px;
  background: #555;
}

.window-buttons, .doc-buttons {
  display: flex;
  justify-content: flex-end;
  gap: 5px;
  padding-right: 2px;
}

.window-buttons svg, .doc-buttons svg {
  width: 8px;
  height: 8px;
}

.menu-row {
  display: flex;
  justify-content: space-between;
  height: 13px;
}

.menu {
  display: flex;
  gap: 16px;
  color: #e4e4e4;
  line-height: 13px;
}

.menu .current {
  margin-right: -8px;
  padding: 0 7px;
  border-radius: 2px 2px 0 0;
  background: #c6c6c6;
  color: #111;
}

.doc-buttons {
  gap: 2px;
  align-items: center;
}

.doc-buttons .help {
  width: 8px;
  height: 9px;
  background: #2c5f9e;
  color: #fff;
  font-weight: bold;
}

/* ribbon */
.ribbon {
  display: flex;
  height: 50px;
  border-bottom: 1px solid #8a8a8a;
  background: linear-gradient(#c3c3c4, #b9b9ba 50%, #aaaaab);
}

.group {
  padding: 2px 1px 0;
  border-right: 1px solid #888;
  box-shadow: 1px 0 #c8c8c8;
}

.group.tight {
  padding: 2px 0 0;
}

.tools {
  display: flex;
  height: 38px;
}

.group h2 {
  line-height: 9px;
  text-align: center;
}

.tool {
  position: relative;
  display: flex;
  flex-direction: column;
  align-items: center;
  min-width: 28px;
  padding: 1px 1px 0;
  border-radius: 1px;
  line-height: 11px;
  white-space: nowrap;
}

.tool svg {
  width: 20px;
  height: 18px;
  margin-bottom: 4px;
}

.tool.mid {
  min-width: 24px;
}

.tool:disabled {
  color: #8e8e8e;
}

.caret::after {
  content: "";
  position: absolute;
  bottom: 0;
  left: calc(50% - 2px);
  border: 2px solid transparent;
  border-top-color: #555;
  border-bottom: 0;
}

.tool.pressed {
  background: linear-gradient(#ffdc7a, #fbca4b);
  outline: 1px solid #e4b446;
  outline-offset: -1px;
}

.tool.split {
  margin-left: 1px;
  background: linear-gradient(#ffd671 22px, #c0bbaf 22px);
  outline: 1px solid #d7a645;
  outline-offset: -1px;
}

.rule {
  width: 1px;
  margin-right: 1px;
  background: #d8d8d8;
}

.group.narrow {
  padding: 2px 0 0;
}

.tool.framed {
  width: 23px;
  min-width: 23px;
  height: 38px;
}

.tool.framed svg {
  width: 18px;
  margin-bottom: 2px;
  border: 1px solid #999;
}

/* document tabs */
.doc-tabs {
  display: flex;
  align-items: flex-end;
  height: 16px;
  padding-left: 20px;
  background: #6d6d6d;
}

.doc-tab {
  display: flex;
  align-items: center;
  gap: 2px;
  height: 13px;
  padding: 0 2px;
  color: #dedede;
  font-family: "Noto Sans", "Noto Sans CJK SC", sans-serif;
}

.doc-tab svg {
  width: 10px;
  height: 10px;
}

.doc-tab button {
  margin-left: 2px;
  font-family: "DejaVu Sans", sans-serif;
}

.doc-tab.active {
  border-radius: 1px 1px 0 0;
  background: #d6d6d7;
  color: #222;
}

.tab-nav {
  display: flex;
  height: 13px;
  margin-left: auto;
  padding-right: 16px;
}

.tab-nav svg {
  width: 8px;
  height: 8px;
}

/* docks and viewport */
.workspace {
  display: flex;
  flex: 1;
  min-height: 0;
}

.dock {
  display: flex;
  flex-direction: column;
  width: 17px;
  margin-top: -13px;
}

.dock.left {
  padding-right: 3px;
  gap: 9px;
}

.dock.right {
  padding-left: 3px;
  gap: 8px;
}

.dock-tab {
  display: flex;
  flex-direction: column;
  align-items: center;
  gap: 1px;
  padding: 0 0 1px;
  border: 1px solid #bcbcbc;
  background: #cdcdce;
}

.dock-tab svg {
  width: 12px;
  height: 12px;
}

.dock-tab span {
  writing-mode: vertical-rl;
  text-orientation: sideways;
}

.dock-tab.tall {
  height: 62px;
}

.dock-icon {
  height: 12px;
  width: 11px;
  border: 1px solid #477eb4;
  background: #e5f1fb;
  color: #2868aa;
  font-size: 9px;
  font-weight: bold;
}

.dots {
  display: grid;
  grid-template-columns: 2px 2px;
  gap: 5px;
  padding: 0 2px;
}

.dots i {
  height: 2px;
  background: #ccc;
}

.viewport {
  position: relative;
  flex: 1;
  min-width: 0;
  background: #fbfbfb;
  box-shadow: 0 0 0 1px #999;
}

.scene {
  width: 100%;
  height: 100%;
}

.cube-text {
  font-family: "Liberation Serif", serif;
  font-size: 6px;
  fill: #666;
}

/* pathfinder tree, floats over the model */
.pathfinder {
  position: absolute;
  top: 1px;
  left: 2px;
  width: 139px;
}

.grip {
  height: 4px;
  background: #d2d2d3;
  border-bottom: 1px solid #aaa;
}

.grip i {
  display: block;
  width: 24px;
  height: 2px;
  margin: 0 auto;
  border-top: 1px dotted #777;
}

.find {
  display: block;
  width: 100%;
  height: 11px;
  margin: 3px 0 2px;
  padding: 0 2px;
  border: 1px solid #c4c4c4;
  background: #fff;
}

.find::placeholder {
  color: #777;
}

.tree {
  list-style: none;
  font-family: "Liberation Mono", "Noto Sans CJK SC", monospace;
  font-size: 6px;
}

.tree li, .tree label {
  display: flex;
  align-items: center;
  gap: 1px;
  height: 9px;
}

.tree li {
  padding-left: 2px;
}

.tree .root {
  gap: 2px;
}

.tree .node {
  padding-left: 5px;
}

.tree .leaf {
  padding-left: 23px;
}

.tree .part {
  padding-left: 13px;
}

.tree svg {
  width: 8px;
  height: 8px;
}

.tree span, .tree b {
  height: 9px;
  padding: 0 1px;
  border: 1px solid #d0d0d0;
  border-left: 0;
  background: #f1f1f1;
  line-height: 7px;
}

.tree .dim {
  color: #777;
}

.twist {
  width: 7px;
  color: #333;
  font-style: normal;
  font-weight: bold;
}

input[type="checkbox"], input[type="radio"] {
  appearance: none;
  flex: none;
  display: grid;
  place-items: center;
  width: 8px;
  height: 8px;
  border: 1px solid #666;
  background: #fff;
}

input[type="checkbox"]:checked::after {
  content: "";
  width: 5px;
  height: 3px;
  border: solid #333;
  border-width: 0 0 1px 1px;
  transform: rotate(-45deg);
}

input[type="radio"] {
  border-radius: 50%;
}

input[type="radio"]:checked::after {
  content: "";
  width: 4px;
  height: 4px;
  border-radius: 50%;
  background: #222;
}

.tree input[type="checkbox"] {
  border-color: #4c6684;
}

.notice {
  position: absolute;
  top: 286px;
  left: 2px;
  padding: 0 1px 0 8px;
  border: 1px solid #c5cdd3;
  background: #edf1f4;
  color: #555;
  line-height: 7px;
}

.notice::before {
  content: "";
  position: absolute;
  top: -3px;
  left: 0;
  width: 12px;
  height: 3px;
  background: #e5b366;
}

/* analysis options dialog */
.dialog {
  position: absolute;
  top: 110px;
  left: calc(50% - 128px);
  width: 256px;
  border: 1px solid #8c8c8c;
  background: #f0f0f0;
  box-shadow: 1px 2px 6px rgba(0, 0, 0, .35);
}

.dialog h2 {
  padding-left: 4px;
  background: #fff;
  line-height: 16px;
}

.dialog-body {
  display: flex;
  justify-content: space-between;
  padding: 7px 5px 1px 4px;
}

.options {
  width: 195px;
}

.opt {
  display: flex;
  align-items: center;
  gap: 2px;
  height: 9px;
  white-space: nowrap;
}

.opt.indent {
  padding-left: 5px;
}

fieldset {
  min-width: 0;
  margin: 1px 0 2px;
  padding: 1px 4px 2px;
  border: 1px solid #dcdcdc;
}

legend {
  padding: 0 1px;
  line-height: 10px;
}

.collision {
  padding-top: 1px;
  padding-bottom: 3px;
}

hr {
  height: 1px;
  margin: 3px 0 5px;
  border: 0;
  background: #a0a0a0;
}

.options p {
  white-space: nowrap;
}

.actions {
  display: flex;
  flex-direction: column;
  gap: 2px;
  width: 42px;
}

.actions button {
  height: 11px;
  border: 1px solid #adadad;
  background: #e1e1e1;
  line-height: 9px;
}

.actions .default {
  border: 1px solid #0078d7;
  outline: 1px solid #67a8dc;
  outline-offset: -2px;
}

.actions .apart {
  margin-top: 2px;
}

/* status bar */
.status {
  display: flex;
  height: 12px;
  padding-top: 2px;
  border-top: 1px solid #555;
  background: linear-gradient(#353536, #4a4a4c);
  color: #ddd;
}

.prompt {
  flex: 1;
  padding-left: 266px;
  border-right: 1px solid #ddd;
}

.cell {
  width: 150px;
  border-right: 1px solid #ddd;
}

.status-tools {
  display: flex;
  gap: 2px;
  padding: 0 1px 0 12px;
}

.status-tools svg {
  width: 10px;
  height: 9px;
}

.command {
  width: 80px;
  padding: 0 2px;
  border: 0;
  background: #fff;
  color: #555;
}

.zoom {
  appearance: none;
  width: 67px;
  height: 9px;
  background: linear-gradient(transparent 4px, #999 4px, #999 5px, transparent 5px);
}

.zoom::-webkit-slider-thumb {
  appearance: none;
  width: 6px;
  height: 8px;
  border: 1px solid #7a9ac0;
  background: #cfdff1;
}
```
